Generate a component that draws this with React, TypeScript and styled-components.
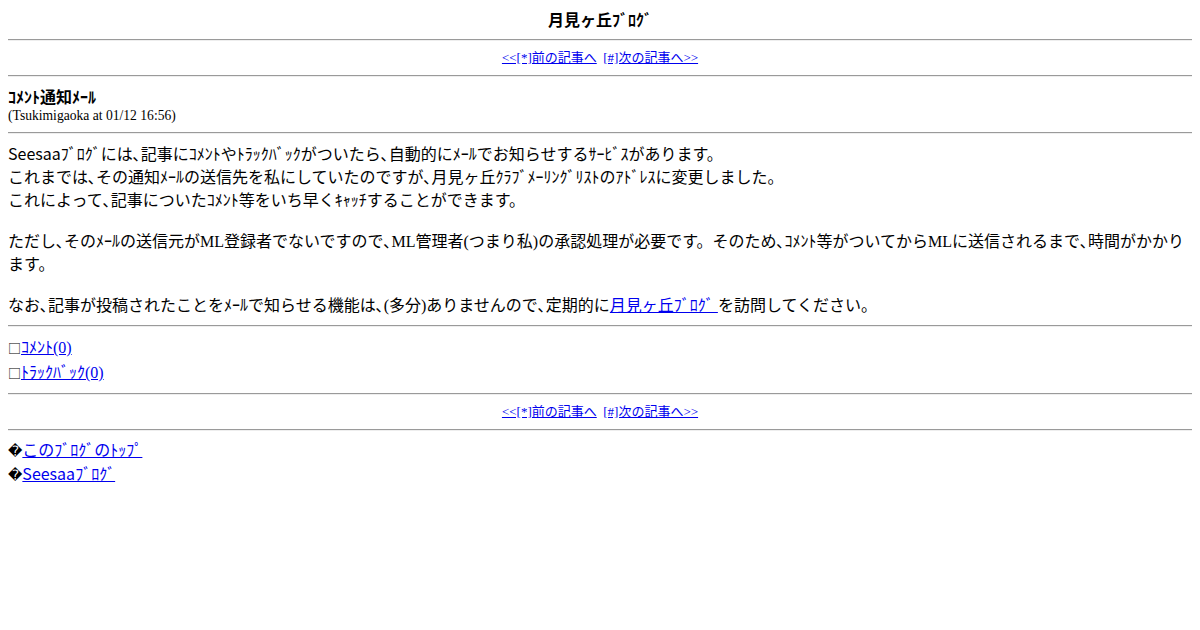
import React from 'react';
import styled, { createGlobalStyle } from 'styled-components';

const GlobalStyle = createGlobalStyle`
  body {
    margin: 8px;
    background: #ffffff;
    color: #000000;
    font-family: "Liberation Serif", "Noto Sans CJK JP", serif;
    font-size: 16px;
  }
`;

const BlogTitle = styled.div`
  text-align: center;
  font-weight: bold;
  font-family: "Noto Sans CJK JP", sans-serif;
  height: 23px;
  line-height: 23px;
`;

const Rule = styled.hr`
  margin: 8px 0;
  border: none;
  border-top: 1px solid #9a9a9a;
  border-bottom: 1px solid #eeeeee;
`;

const PagerNav = styled.div`
  text-align: center;
  font-size: 13px;
  height: 18px;
  line-height: 18px;
`;

const Link = styled.a`
  color: #0000ee;
  text-decoration: underline;
`;

const EntryTitle = styled.div`
  font-weight: bold;
  font-family: "Noto Sans CJK JP", sans-serif;
  height: 23px;
  line-height: 23px;
`;

const EntryMeta = styled.div`
  font-size: 13.6px;
  height: 16px;
  line-height: 16px;
`;

const Paragraph = styled.p`
  margin: 0 0 18px;
  line-height: 23px;

  &:last-child {
    margin-bottom: 0;
  }
`;

const Sans = styled.span`
  font-family: "Noto Sans CJK JP", sans-serif;
`;

const ReactionRow = styled.div`
  height: 25px;
  line-height: 25px;
`;

const Mark = styled.span`
  display: inline-block;
  font-family: "DejaVu Sans", sans-serif;
  font-size: 14px;
  line-height: 1;
`;

const BoxMark = styled.span`
  display: inline-block;
  width: 13px;
  font-family: "Noto Sans CJK JP", sans-serif;
  font-size: 13px;
  line-height: 1;
`;

const FooterRow = styled.div`
  height: 23px;
  line-height: 23px;
`;

const Pager: React.FC = () => (
  <PagerNav>
    <Link href="#">&lt;&lt;[*]前の記事へ</Link>
    {'\u00a0 '}
    <Link href="#">[#]次の記事へ&gt;&gt;</Link>
  </PagerNav>
);

export default function App() {
  return (
    <>
      <GlobalStyle />
      <BlogTitle>月見ヶ丘ﾌﾞﾛｸﾞ</BlogTitle>
      <Rule />
      <Pager />
      <Rule />
      <EntryTitle>ｺﾒﾝﾄ通知ﾒｰﾙ</EntryTitle>
      <EntryMeta>(Tsukimigaoka at 01/12 16:56)</EntryMeta>
      <Rule />
      <div>
        <Paragraph>
          <Sans>Seesaaﾌﾞﾛｸﾞには</Sans>､記事にｺﾒﾝﾄやﾄﾗｯｸﾊﾞｯｸがついたら､自動的にﾒｰﾙでお知らせするｻｰﾋﾞｽがあります。
          <br />
          これまでは､その通知ﾒｰﾙの送信先を私にしていたのですが､月見ヶ丘ｸﾗﾌﾞﾒｰﾘﾝｸﾞﾘｽﾄのｱﾄﾞﾚｽに変更しました。
          <br />
          これによって､記事についたｺﾒﾝﾄ等をいち早くｷｬｯﾁすることができます。
        </Paragraph>
        <Paragraph>
          ただし､そのﾒｰﾙの送信元がML登録者でないですので､ML管理者(つまり私)の承認処理が必要です。そのため､ｺﾒﾝﾄ等がついてからMLに送信されるまで､時間がかかります。
        </Paragraph>
        <Paragraph>
          なお､記事が投稿されたことをﾒｰﾙで知らせる機能は､(多分)ありませんので､定期的に
          <Link href="#">月見ヶ丘ﾌﾞﾛｸﾞ </Link>を訪問してください。
        </Paragraph>
      </div>
      <Rule />
      <ReactionRow>
        <BoxMark>□</BoxMark>
        <Link href="#">ｺﾒﾝﾄ(0)</Link>
      </ReactionRow>
      <ReactionRow>
        <BoxMark>□</BoxMark>
        <Link href="#">ﾄﾗｯｸﾊﾞｯｸ(0)</Link>
      </ReactionRow>
      <Rule />
      <Pager />
      <Rule />
      <FooterRow>
        <Mark>{'\ufffd'}</Mark>
        <Link href="#">このﾌﾞﾛｸﾞのﾄｯﾌﾟ</Link>
      </FooterRow>
      <FooterRow>
        <Mark>{'\ufffd'}</Mark>
        <Link href="#">
          <Sans>Seesaaﾌﾞﾛｸﾞ</Sans>
        </Link>
      </FooterRow>
    </>
  );
}
